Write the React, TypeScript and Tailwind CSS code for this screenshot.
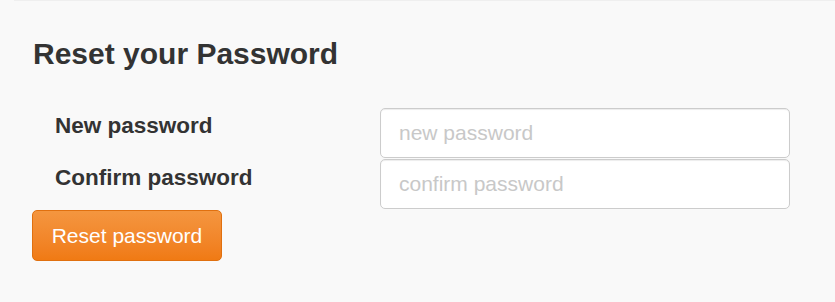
import { useState } from "react";

export default function App() {
  const [password, setPassword] = useState("");
  const [confirm, setConfirm] = useState("");

  return (
    <div className="h-[302px] w-full bg-[#f9f9f9] font-['Liberation_Sans',Arial,sans-serif] text-[#333333]">
      <div className="ml-[14px] border-t border-[#efefef]" />
      <div className="px-[33px] pt-[35px]">
        <h1 className="text-[30px] font-bold leading-[36px]">Reset your Password</h1>

        <form
          className="mt-[36px] grid grid-cols-[347px_410px] gap-y-[1px]"
          onSubmit={(event) => event.preventDefault()}
        >
          <label className="pl-[22px] pt-[1px] text-[22.5px] font-bold leading-[34px]" htmlFor="new-password">
            New password
          </label>
          <input
            className="h-[50px] w-[410px] rounded-[5px] border border-[#cccccc] bg-white px-[18px] text-[21px] shadow-[inset_0_1px_1px_rgba(0,0,0,0.075)] outline-none placeholder:text-[#c8c8c8]"
            id="new-password"
            onChange={(event) => setPassword(event.target.value)}
            placeholder="new password"
            type="password"
            value={password}
          />

          <label className="pl-[22px] pt-[2px] text-[22.5px] font-bold leading-[34px]" htmlFor="confirm-password">
            Confirm password
          </label>
          <input
            className="h-[50px] w-[410px] rounded-[5px] border border-[#cccccc] bg-white px-[18px] text-[21px] shadow-[inset_0_1px_1px_rgba(0,0,0,0.075)] outline-none placeholder:text-[#c8c8c8]"
            id="confirm-password"
            onChange={(event) => setConfirm(event.target.value)}
            placeholder="confirm password"
            type="password"
            value={confirm}
          />

          <div className="col-span-2">
            <button
              className="-ml-px h-[51px] w-[190px] rounded-[5px] border border-[#e0700f] bg-gradient-to-b from-[#f4963f] to-[#f07a13] text-[21px] leading-none text-white"
              type="submit"
            >
              Reset password
            </button>
          </div>
        </form>
      </div>
    </div>
  );
}
